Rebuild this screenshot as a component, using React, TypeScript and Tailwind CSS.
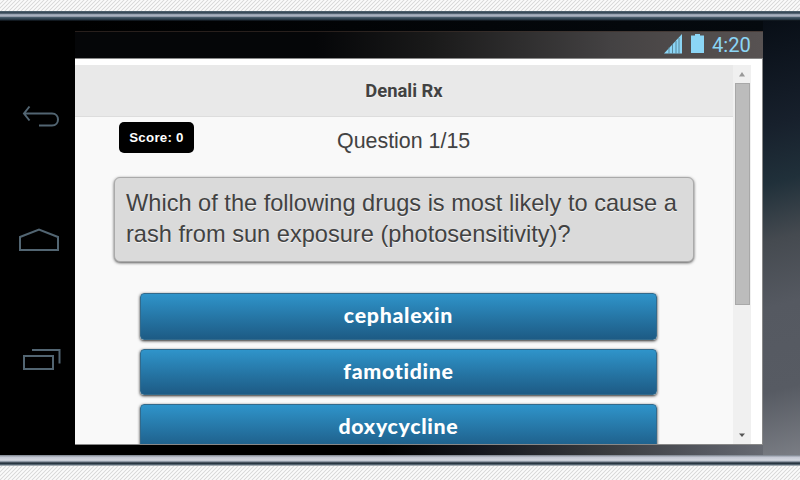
import React from "react";

const answers = ["cephalexin", "famotidine", "doxycycline"];

function Hardware() {
  return (
    <nav className="w-[75px] shrink-0 text-[#526572]">
      <svg width="75" height="424" viewBox="0 20.5 75 424" fill="none" stroke="currentColor" strokeWidth="2">
        <path d="M29.500 106.500L24 113.500L29.500 120.500M24 113.500H52C60 113.500 60 125.500 52 125.500H39" transform="translate(0 -.5)" />
        <path d="M20 236.500L39 229L58 236.500V249.500H20Z" />
        <path d="M24 355.500H53V368.500H24ZM32 349.500H59.500V363" />
      </svg>
    </nav>
  );
}

function StatusBar() {
  return (
    <div className="flex h-[27px] items-start border-t border-[#40302a]/60 bg-[linear-gradient(90deg,#050608_0%,#050608_35%,#1a1a1a_52%,#444243_78%,#4d4949_86%,#575252_100%)] pl-[589px] pt-px text-[#8bd5f5]">
      <svg width="42" height="22" viewBox="0 0 42 22" fill="currentColor">
        <path d="M0 20.500L18 1V20.500Z" />
        <path d="M5 14V20.500M8.500 11V20.500M12 8V20.500M15 5V20.500" stroke="#4d7484" strokeWidth="0.8" />
        <path d="M27 2.500H31V1H36V2.500H40V20H27Z" />
      </svg>
      <span className="ml-[6px] font-[Roboto,sans-serif] text-[20.2px] leading-6">4:20</span>
    </div>
  );
}

function Scrollbar() {
  return (
    <div className="flex w-[18px] shrink-0 flex-col items-center bg-[#f0f0f0]">
      <svg className="h-[18px] w-full shrink-0" viewBox="0 0 18 18"><path d="M6 11.500L9 7L12 11.500Z" fill="#999" /></svg>
      <div className="h-[222px] w-[15px] border border-[#a8a8a8] bg-[#bcbcbc]" />
      <svg className="mt-auto h-[19px] w-full" viewBox="0 0 18 19"><path d="M6 8.500H12L9 12Z" fill="#555" /></svg>
    </div>
  );
}

function Quiz() {
  return (
    <main className="h-full w-[658px] overflow-hidden bg-[#f9f9f9] font-['Liberation_Sans',sans-serif] text-[#424242] [text-shadow:0_1px_0_#f3f3f3]">
      <header className="flex h-[52px] items-center justify-center border-b border-[#ddd] bg-[#e9e9e9] pt-px">
        <h1 className="font-[Roboto,sans-serif] text-[18.4px] font-bold">Denali Rx</h1>
      </header>
      <div className="flex h-[60px] items-start pl-[44px] pt-[5px]">
        <div className="flex h-[31px] w-[75px] items-center justify-center rounded-[5px] bg-black text-[13.3px] font-bold tracking-[0.25px] text-white [text-shadow:none]">Score: 0</div>
        <h2 className="ml-[143px] mt-[7px] whitespace-nowrap text-[21.4px] leading-[25px]">Question 1/15</h2>
      </div>
      <section className="ml-[39px] h-[85px] w-[580px] whitespace-nowrap rounded-[6px] border border-[#aaa] bg-[#dadada] pl-[11px] pt-[10px] text-[23.6px] leading-[31px] shadow-[0_1px_3px_#555]">
        Which of the following drugs is most likely to cause a<br />rash from sun exposure (photosensitivity)?
      </section>
      <div className="ml-[65px] mt-[31px] flex w-[517px] flex-col gap-[9px]">
        {answers.map((name) => (
          <button key={name} className="h-[46.500px] shrink-0 rounded-[4px] border border-[#326a8c] bg-linear-to-b from-[#2f94ca] to-[#1d5b85] font-[Lato,sans-serif] text-[21.3px] font-black tracking-[0.700px] text-white shadow-[0_1px_3px_#222] [text-shadow:none]">{name}</button>
        ))}
      </div>
    </main>
  );
}

export default function App() {
  return (
    <div className="flex h-[480px] w-[800px] flex-col overflow-hidden bg-[#fafafa] bg-[linear-gradient(135deg,#dadada_0%,#fbfbfb_16%,#fbfbfb_34%,#dadada_50%,#fbfbfb_66%,#fbfbfb_84%,#dadada_100%)] bg-[length:4px_4px]">
      <div className="mt-[11px] h-[10px] shrink-0 bg-[linear-gradient(#536572_0%,#2f4150_20%,#aeb6c5_38%,#a2a9b7_53%,#465a69_65%,#273744_85%,#06090d_100%)]" />
      <div className="flex h-[434px] shrink-0 bg-[linear-gradient(90deg,#000_0%,#000_48%,#15171e_60%,#3a3c3f_76%,#555860_88%,#72757d_100%)]">
        <Hardware />
        <div className="w-[688px] shrink-0">
          <div className="h-[10px] bg-[linear-gradient(90deg,#000,#050a0f)]" />
          <StatusBar />
          <div className="flex h-[387px] border-y border-[#888] border-r bg-white pt-[6px]">
            <Quiz />
            <Scrollbar />
          </div>
        </div>
        <div className="flex-1 bg-[linear-gradient(165deg,#080e16_0%,#17202c_24%,#20303a_37%,#454a50_50%,#555961_65%,#575b63_84%,#7a7d84_100%)]" />
      </div>
      <div className="h-[11px] shrink-0 bg-[linear-gradient(#777f89_0%,#c4c8d4_20%,#d4d8e0_48%,#8a94a0_60%,#182630_74%,#6b7b87_91%,#ddd_100%)]" />
    </div>
  );
}
